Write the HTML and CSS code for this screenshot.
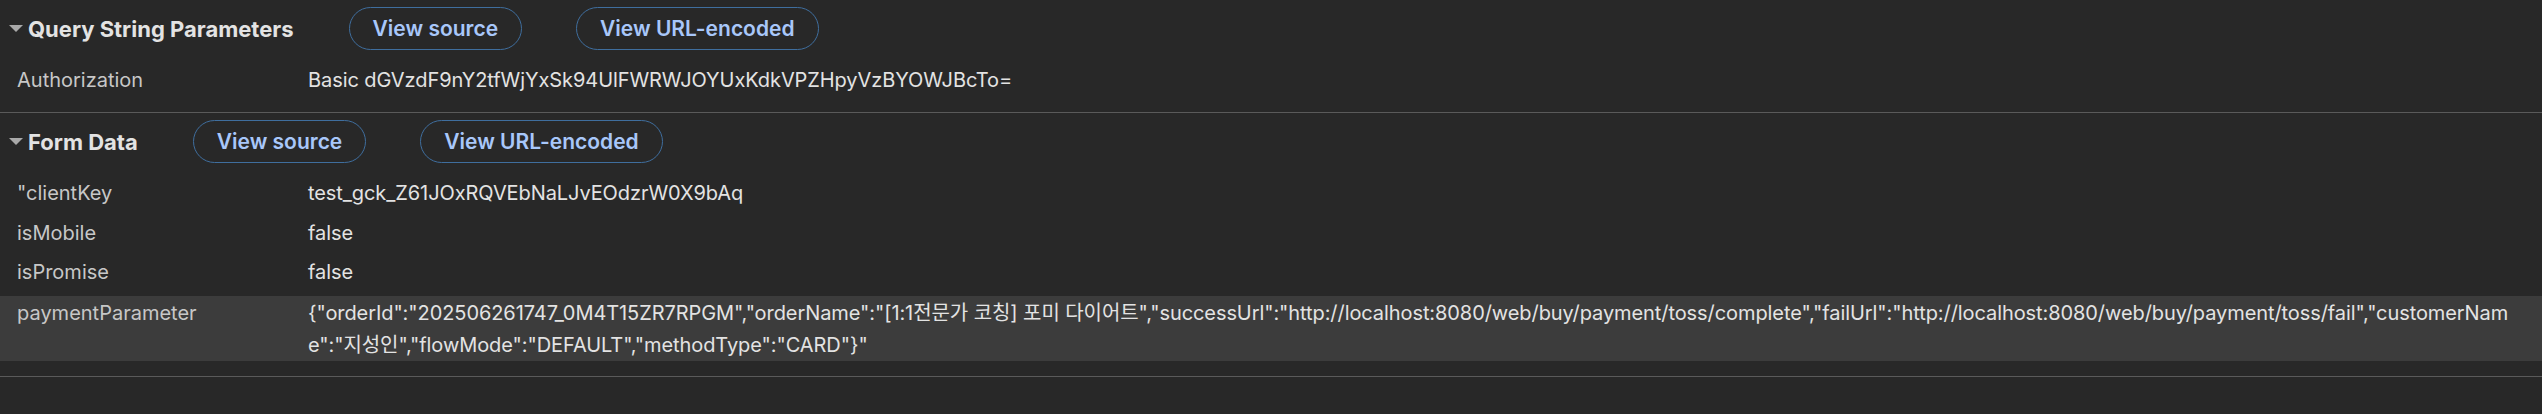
FILE: index.html
```html
<!DOCTYPE html>
<html lang="en">
<head>
<meta charset="utf-8">
<title>Payload</title>
<link rel="stylesheet" href="styles.css">
</head>
<body>
<div class="panel">
  <section class="section section--query">
    <div class="section-header">
      <span class="toggle"><svg class="caret" width="14" height="7" viewBox="0 0 14 7"><path d="M0 0 H14 L7 7 Z" fill="#a9a9a9"/></svg>Query String Parameters</span>
      <div class="actions">
        <button class="pill">View source</button>
        <button class="pill">View URL-encoded</button>
      </div>
    </div>
    <div class="rows">
      <div class="row"><span class="key">Authorization</span><span class="value">Basic dGVzdF9nY2tfWjYxSk94UlFWRWJOYUxKdkVPZHpyVzBYOWJBcTo=</span></div>
    </div>
  </section>
  <section class="section section--form">
    <div class="section-header">
      <span class="toggle"><svg class="caret" width="14" height="7" viewBox="0 0 14 7"><path d="M0 0 H14 L7 7 Z" fill="#a9a9a9"/></svg>Form Data</span>
      <div class="actions">
        <button class="pill">View source</button>
        <button class="pill">View URL-encoded</button>
      </div>
    </div>
    <div class="rows">
      <div class="row"><span class="key">"clientKey</span><span class="value">test_gck_Z61JOxRQVEbNaLJvEOdzrW0X9bAq</span></div>
      <div class="row"><span class="key">isMobile</span><span class="value">false</span></div>
      <div class="row"><span class="key">isPromise</span><span class="value">false</span></div>
      <div class="row row--selected"><span class="key">paymentParameter</span><span class="value">{"orderId":"202506261747_0M4T15ZR7RPGM","orderName":"[1:1전문가 코칭] 포미 다이어트","successUrl":"http://localhost:8080/web/buy/payment/toss/complete","failUrl":"http://localhost:8080/web/buy/payment/toss/fail","customerName":"지성인","flowMode":"DEFAULT","methodType":"CARD"}"</span></div>
    </div>
  </section>
</div>
</body>
</html>
```
FILE: styles.css
```css
html, body {
  margin: 0;
  padding: 0;
  background: #282828;
}
body {
  font-family: Inter, "Noto Sans CJK KR", sans-serif;
  font-size: 20px;
  color: #e3e3e3;
  height: 414px;
  overflow: hidden;
}
.section {
  border-bottom: 1px solid #5a5a5a;
}
.section-header {
  display: flex;
  align-items: center;
  padding: 7px 0 7px 9px;
  gap: 55px;
}
.toggle {
  display: flex;
  align-items: center;
  gap: 5px;
  font-size: 22px;
  font-weight: 700;
  color: #e3e3e3;
}
.caret {
  display: block;
}
.actions {
  display: flex;
  gap: 54px;
}
.pill {
  height: 43px;
  padding: 0 23px;
  border: 1px solid #3f6e9e;
  border-radius: 22px;
  background: transparent;
  color: #a8c7fa;
  font-family: inherit;
  font-size: 21px;
  font-weight: 600;
}
.rows {
  display: flex;
  flex-direction: column;
  gap: 7.5px;
  padding: 7px 0 15px;
}
.section--query .rows {
  padding-bottom: 16px;
}
.row {
  display: grid;
  grid-template-columns: 291px 1fr;
  padding: 0 26px 0 17px;
  line-height: 32px;
}
.row--selected {
  padding-top: 1px;
  padding-bottom: 0;
  background: #3c3c3c;
}
.key {
  color: #c7c7c7;
}
.value {
  color: #e3e3e3;
  word-break: break-all;
  letter-spacing: -0.08px;
}
```
